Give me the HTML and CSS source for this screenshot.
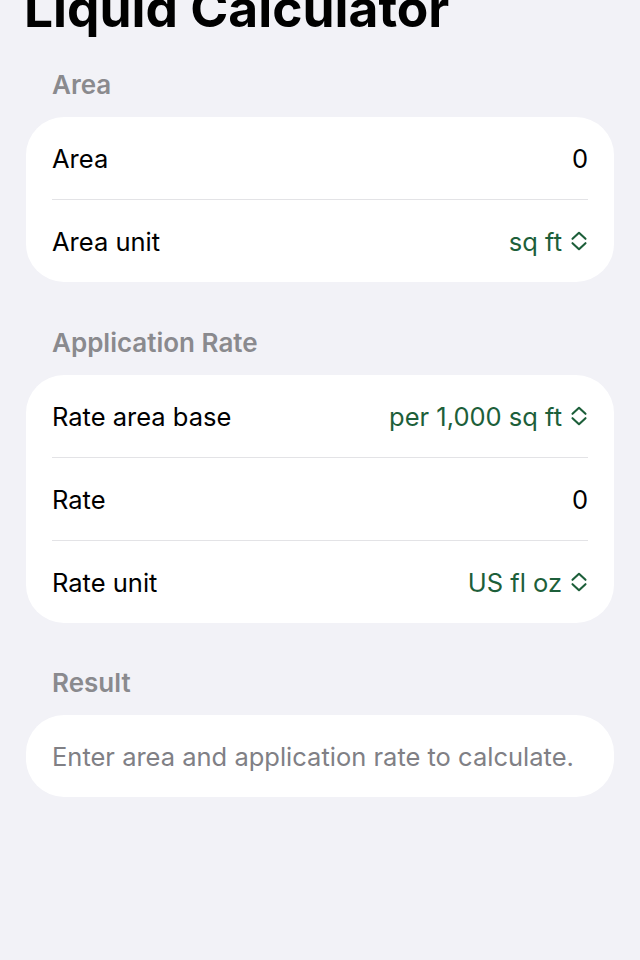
FILE: index.html
```html
<!DOCTYPE html>
<html lang="en">
<head>
<meta charset="utf-8">
<title>Liquid Calculator</title>
<link rel="stylesheet" href="styles.css">
</head>
<body>
<main class="page">
  <h1 class="title">Liquid Calculator</h1>

  <section class="section">
    <h2 class="section-header">Area</h2>
    <div class="card">
      <div class="row">
        <span class="label">Area</span>
        <span class="value">0</span>
      </div>
      <div class="divider"></div>
      <div class="row">
        <span class="label">Area unit</span>
        <span class="picker">sq ft
          <svg class="chev" viewBox="0 0 16 20" width="16" height="20" aria-hidden="true"><path d="M1.5 7.8 L8 1.8 L14.5 7.8 M1.5 12.2 L8 18.2 L14.5 12.2" fill="none" stroke="currentColor" stroke-width="2.1" stroke-linecap="round" stroke-linejoin="round"/></svg>
        </span>
      </div>
    </div>
  </section>

  <section class="section">
    <h2 class="section-header">Application Rate</h2>
    <div class="card">
      <div class="row">
        <span class="label">Rate area base</span>
        <span class="picker">per 1,000 sq ft
          <svg class="chev" viewBox="0 0 16 20" width="16" height="20" aria-hidden="true"><path d="M1.5 7.8 L8 1.8 L14.5 7.8 M1.5 12.2 L8 18.2 L14.5 12.2" fill="none" stroke="currentColor" stroke-width="2.1" stroke-linecap="round" stroke-linejoin="round"/></svg>
        </span>
      </div>
      <div class="divider"></div>
      <div class="row">
        <span class="label">Rate</span>
        <span class="value">0</span>
      </div>
      <div class="divider"></div>
      <div class="row">
        <span class="label">Rate unit</span>
        <span class="picker">US fl oz
          <svg class="chev" viewBox="0 0 16 20" width="16" height="20" aria-hidden="true"><path d="M1.5 7.8 L8 1.8 L14.5 7.8 M1.5 12.2 L8 18.2 L14.5 12.2" fill="none" stroke="currentColor" stroke-width="2.1" stroke-linecap="round" stroke-linejoin="round"/></svg>
        </span>
      </div>
    </div>
  </section>

  <section class="section">
    <h2 class="section-header">Result</h2>
    <div class="card">
      <div class="row">
        <span class="placeholder">Enter area and application rate to calculate.</span>
      </div>
    </div>
  </section>
</main>
</body>
</html>
```

FILE: styles.css
```css
html, body {
  margin: 0;
  padding: 0;
  background: #f2f2f7;
}

body {
  font-family: Inter, "Noto Sans", "Liberation Sans", sans-serif;
  color: #000;
  -webkit-font-smoothing: antialiased;
}

.page {
  padding: 0 26px;
}

.title {
  margin: -22px 0 0 -2px;
  font-size: 51.5px;
  line-height: 60px;
  font-weight: 700;
  letter-spacing: 0;
}

.section {
  margin-top: 46px;
}

.section:first-of-type {
  margin-top: 32px;
}

.section:last-of-type {
  margin-top: 45px;
}

.section-header {
  margin: 0 0 17px;
  padding-left: 26px;
  font-size: 26px;
  line-height: 30px;
  font-weight: 600;
  color: #8a8a8e;
  letter-spacing: 0;
}

.card {
  background: #fff;
  border-radius: 38px;
  overflow: hidden;
}

.row {
  height: 82px;
  padding: 0 26px;
  display: flex;
  align-items: center;
  justify-content: space-between;
  font-size: 25.5px;
  letter-spacing: 0;
}

.divider {
  height: 1px;
  margin: 0 26px;
  background: #e3e3e6;
}

.value {
  color: #000;
}

.picker {
  display: flex;
  align-items: center;
  gap: 9px;
  color: #1d5f3a;
  margin-right: 1px;
}

.chev {
  display: block;
}

.placeholder {
  color: #808085;
}
```
